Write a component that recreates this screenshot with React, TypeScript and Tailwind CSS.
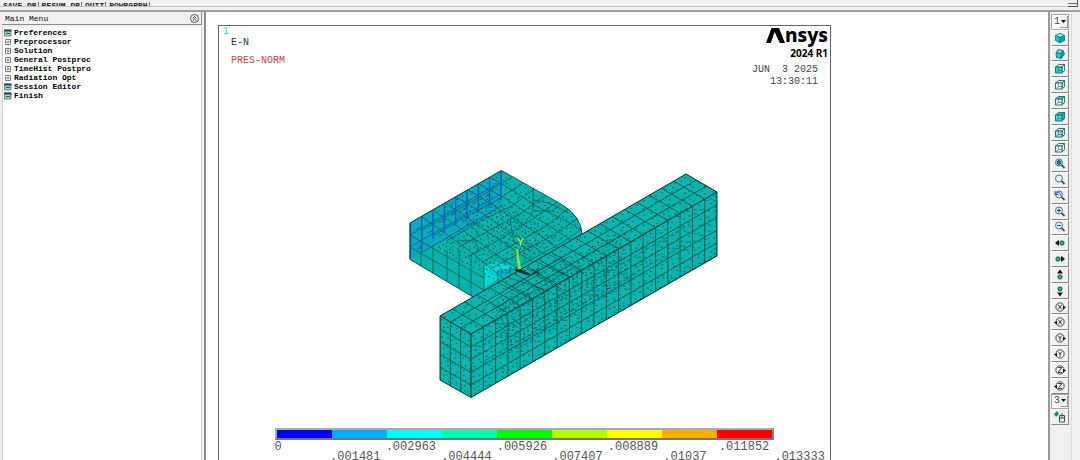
import React from "react";

type Pt = [number, number];

const MENU: { label: string; leaf: boolean }[] = [
  { label: "Preferences", leaf: true },
  { label: "Preprocessor", leaf: false },
  { label: "Solution", leaf: false },
  { label: "General Postproc", leaf: false },
  { label: "TimeHist Postpro", leaf: false },
  { label: "Radiation Opt", leaf: false },
  { label: "Session Editor", leaf: true },
  { label: "Finish", leaf: true },
];

const LEGEND_COLORS = [
  "bg-[#0000ee]",
  "bg-[#00aeff]",
  "bg-[#00ffff]",
  "bg-[#00ffae]",
  "bg-[#00fb00]",
  "bg-[#aeff00]",
  "bg-[#ffff00]",
  "bg-[#ffae00]",
  "bg-[#f60000]",
];

const LEGEND_LABELS = [
  "0", ".001481", ".002963", ".004444", ".005926",
  ".007407", ".008889", ".01037", ".011852", ".013333",
];

const lerp = (a: Pt, b: Pt, t: number): Pt => [a[0] + (b[0] - a[0]) * t, a[1] + (b[1] - a[1]) * t];

const seg = (a: Pt, b: Pt) =>
  `M${a[0].toFixed(1)} ${a[1].toFixed(1)}L${b[0].toFixed(1)} ${b[1].toFixed(1)}`;

/* Grid lines over the parallelogram with corner o and sides o-u and o-v. */
function mesh(o: Pt, u: Pt, v: Pt, nu: number, nv: number) {
  const w: Pt = [u[0] + v[0] - o[0], u[1] + v[1] - o[1]];
  let d = "";
  for (let i = 0; i <= nu; i++) d += seg(lerp(o, u, i / nu), lerp(v, w, i / nu));
  for (let j = 0; j <= nv; j++) d += seg(lerp(o, v, j / nv), lerp(u, w, j / nv));
  return d;
}

/* Small node ticks scattered over the parallelogram. */
function ticks(o: Pt, u: Pt, v: Pt, nu: number, nv: number, len: number, seed: number) {
  let s = seed;
  const rnd = () => {
    s = (s * 16807) % 2147483647;
    return s / 2147483647;
  };
  let d = "";
  for (let i = 0; i < nu; i++) {
    for (let j = 0; j < nv; j++) {
      const a = (i + 0.2 + rnd() * 0.6) / nu;
      const b = (j + 0.2 + rnd() * 0.6) / nv;
      const x = o[0] + (u[0] - o[0]) * a + (v[0] - o[0]) * b;
      const y = o[1] + (u[1] - o[1]) * a + (v[1] - o[1]) * b;
      d += `M${x.toFixed(1)} ${y.toFixed(1)}h${(len * (0.6 + rnd() * 0.6)).toFixed(1)}`;
    }
  }
  return d;
}

const A: Pt = [440, 316];
const B: Pt = [686, 174];
const D: Pt = [471, 334];
const C: Pt = [717, 192];
const E: Pt = [440, 380];
const F: Pt = [471, 397.5];

const BAR = "M440 316L686 174L717 192V256L471 397.5L440 380Z";
const PLATE = "M410 223L501.500 170.500L560 203.500Q582 216 582 235L520 272L473 297L410 259.500Z";

function Model() {
  return (
    <svg viewBox="219 100 611 325" className="block h-auto w-full shrink-0" role="img" aria-label="Element mesh">
      <defs>
        <clipPath id="plate"><path d={PLATE} /></clipPath>
        <clipPath id="bar"><path d={BAR} /></clipPath>
      </defs>
      <path d={PLATE} fill="#0bb3ad" />
      <g clipPath="url(#plate)" fill="none">
        <path d="M410 223L501.500 170.500V207L421 253L410 259.500Z" fill="#0ca9b8" />
        <path d="M484 266l15-4 17 6-14 8-18 12z" fill="#09d9d6" />
        <path d="M499 270l15-2-14 9z" fill="#05a7d5" />
        <path d={ticks([430, 245], [501, 204], [492, 280], 17, 17, 1.2, 71)} stroke="#022f2d" strokeWidth="0.9" />
        <path d={ticks([501, 172], [440, 208], [590, 224], 13, 19, 1.2, 93)} stroke="#022f2d" strokeWidth="0.9" />
        <g stroke="#054b47" strokeWidth="0.65">
          <path d="M512 177L478 198L421 231M523 183L497 200L462 219L433 236M534 189L512 206L484 219L446 241M545 195L520 214L490 230L459 247M557 202L533 219L505 236L471 255M568 209L546 226L516 243L482 262M577 219L552 236L525 250L492 268M582 229L560 244L530 260L505 274" />
          <path d="M490 177L512 190L536 206L560 218L582 230M479 184L503 197L526 212L551 227L572 241M468 190L491 204L516 220L540 235L560 250M456 197L481 212L503 228L528 243L548 256M445 203L469 219L492 235L516 251L536 264M433 210L457 226L480 243L504 260L524 272M421 216L445 233L467 249L488 266L505 280" />
          <path d="M533 190V211L552 211L562 203M533 200L549 203L569 213M510 220L514 242L530 250M457 241L475 240L479 250L466 258M466 221L479 234" />
          <path d="M421 244V268M433 247V274M447 250V281M459 249V288M471 256V297M484 265V304M410 235L484 278M410 247L484 290" />
          <path d="M498 270V284M510 267V278" />
        </g>
        <g stroke="#085fc5" strokeWidth="1.4">
          {[0, 1, 2, 3, 4, 5, 6, 7, 8].map((i) => {
            const x = 410.5 + i * 11.3;
            const y = 223 - i * 6.5;
            return <path key={i} d={`M${x} ${y}v${i < 2 ? 34 : 29}`} />;
          })}
          <path d="M410 235L501 182M410 247L501 194M421 253L501 206" strokeWidth="1" />
        </g>
        <path d="M416 230l6-4M428 233l5-3M439 223l6-3M451 216l5-3M462 210l5-3M474 203l5-3M485 197l5-3M417 249l4-2M439 236l4-2M462 222l4-2M485 209l4-2" stroke="#064996" strokeWidth="0.7" />
      </g>
      <path d={PLATE} fill="none" stroke="#054441" strokeWidth="0.9" />
      <path d="M410 223L501.500 170.500V181M410 223V259" fill="none" stroke="#0854a7" strokeWidth="1" />

      <path d={BAR} fill="#0bb5ae" />
      <g clipPath="url(#bar)" fill="none">
        <path d={ticks(D, C, F, 46, 12, 2.4, 19)} stroke="#054c48" strokeWidth="0.7" />
        <path d={ticks(A, B, D, 46, 5, 1.4, 41)} stroke="#022f2d" strokeWidth="0.9" />
        <path d={ticks(A, D, E, 7, 12, 1.2, 13)} stroke="#022f2d" strokeWidth="0.8" />
        <path d={ticks([492, 305], [620, 231], [502, 358], 31, 18, 2.1, 59)} stroke="#054c48" strokeWidth="0.6" />
        <g stroke="#04504c" strokeWidth="0.85">
          <path d={mesh(A, B, D, 20, 3)} />
          <path d={mesh(D, C, F, 20, 5)} />
          <path d={mesh(A, D, E, 3, 5)} />
        </g>
        <g stroke="#064542" strokeWidth="0.6">
          <path d="M496 282l38 18M501 275l47 16M526 268l35 21M532 260l43 19M548 254l36 19M485 306l85-50M497 313l78-46M506 289l58-33" />
          <path d="M478 318L677 203M480 330L690 208M482 345L690 224M486 360L690 241" strokeDasharray="4 3" />
        </g>
      </g>
      <path d={BAR} fill="none" stroke="#043f3c" strokeWidth="1" />
      <path d="M440 316L471 334L717 192M471 334V397" fill="none" stroke="#04504c" strokeWidth="0.9" />

      <path d="M518.500 270L516.500 249L517.500 249L520.500 269Z" fill="#7fdf35" stroke="#9bed20" strokeWidth="0.8" />
      <path d="M517.500 238l3 4 3-4M520.500 242v4" fill="none" stroke="#a3ee2b" strokeWidth="1.3" />
      <path d="M515 269l6 .5 11 5-5 .5-12-4z" fill="#052e2b" />
      <path d="M532 269l7 5M539 268l-7 7" stroke="#05423f" strokeWidth="1.2" />
    </svg>
  );
}

type Tool = { name: string; icon: React.ReactNode };

function Cube({ fill = "#f0f0f0", side = "#f0f0f0", front = "#f0f0f0" }: { fill?: string; side?: string; front?: string }) {
  return (
    <g stroke="#1b6c6b" strokeWidth="0.9" strokeLinejoin="round">
      <path d="M1.500 4L4.500 1.500H10.500L8 4Z" fill={fill} />
      <path d="M8 4L10.500 1.500V7.500L8 10Z" fill={side} />
      <path d="M1.500 4H8V10H1.500Z" fill={front} />
      <path d="M1.500 10L4.500 7.500H8M4.500 4V7.500" fill="none" strokeWidth="0.6" />
    </g>
  );
}

function Lens({ children }: { children?: React.ReactNode }) {
  return (
    <g fill="none">
      <circle cx="5" cy="4.500" r="3.500" stroke="#4d7589" fill="#e5f5fa" />
      <path d="M7.500 7L10.500 10" stroke="#33424b" strokeWidth="1.700" />
      {children}
    </g>
  );
}

function Ball({ x, y }: { x: number; y: number }) {
  return (
    <g>
      <circle cx={x} cy={y} r="2.200" fill="#178a80" stroke="#0b5951" strokeWidth="0.700" />
      <circle cx={x} cy={y} r="0.700" fill="#a5e3dd" />
    </g>
  );
}

function Spin({ axis, back }: { axis: "X" | "Y" | "Z"; back?: boolean }) {
  const marks = { X: "M4 3.500l4 5M8 3.500l-4 5", Y: "M4 3.500l2 2.500 2-2.500M6 6v3", Z: "M4 3.500h4l-4 5h4" };
  return (
    <g fill="none" stroke="#404040" strokeWidth="0.800">
      <circle cx="6" cy="6" r="4.200" strokeDasharray="22 4" transform={back ? "rotate(200 6 6)" : "rotate(30 6 6)"} />
      <path d={marks[axis]} strokeWidth="1" />
      <path d={back ? "M0 6.500l3-2v4z" : "M12 6.500l-3-2v4z"} fill="#111" stroke="none" />
    </g>
  );
}

const TOOLS: Tool[] = [
  {
    name: "Isometric View",
    icon: (
      <g stroke="#08797a" strokeWidth="0.800" strokeLinejoin="round">
        <path d="M1.500 3.500L6 1.200L10.500 3.500L6 5.500Z" fill="#7af1f2" />
        <path d="M1.500 3.500L6 5.500V10.800L1.500 8.500Z" fill="#12cbd2" />
        <path d="M10.500 3.500L6 5.500V10.800L10.500 8.500Z" fill="#0aa5ac" />
      </g>
    ),
  },
  {
    name: "Oblique View",
    icon: (
      <g stroke="#08696a" strokeWidth="0.800" strokeLinejoin="round">
        <path d="M2 5L4 1.500L9 2.500L7.500 5.500Z" fill="#4be5e8" />
        <path d="M2 5L7.500 5.500L7 10.500L2.500 9.500Z" fill="#19d4da" />
        <path d="M9 2.500L10.500 6L7 10.500L7.500 5.500Z" fill="#0aa5ac" />
      </g>
    ),
  },
  { name: "Front View", icon: <Cube front="#20d8dc" /> },
  { name: "Right View", icon: <Cube side="#bfe9ea" /> },
  { name: "Top View", icon: <Cube fill="#20d8dc" /> },
  { name: "Back View", icon: <Cube fill="#20c8cc" side="#13b5bc" front="#52d5d9" /> },
  { name: "Left View", icon: <Cube front="#9fdfe1" /> },
  { name: "Bottom View", icon: <Cube /> },
  { name: "Fit View", icon: <Lens><circle cx="5" cy="4.500" r="2" fill="#0b8f8f" stroke="#075c5c" /></Lens> },
  { name: "Zoom Model", icon: <Lens /> },
  { name: "Back Up", icon: <Lens><path d="M1 1v3.500h3.500M1.500 4C4 1 7 3 7 6" stroke="#244fb0" /></Lens> },
  { name: "Zoom In", icon: <Lens><path d="M3 4.500h4M5 2.500v4" stroke="#123d9a" /></Lens> },
  { name: "Zoom Out", icon: <Lens><path d="M3 4.500h4" stroke="#12609a" /></Lens> },
  { name: "Pan Left", icon: <g><path d="M1 6l4-3v6z" fill="#111" /><Ball x={8} y={6} /></g> },
  { name: "Pan Right", icon: <g><path d="M11 6L7 3v6z" fill="#111" /><Ball x={4} y={6} /></g> },
  { name: "Pan Up", icon: <g><path d="M6 .5l3 4H3z" fill="#111" /><Ball x={6} y={8} /></g> },
  { name: "Pan Down", icon: <g><path d="M6 11.500l3-4H3z" fill="#111" /><Ball x={6} y={4} /></g> },
  { name: "Rotate X +", icon: <Spin axis="X" /> },
  { name: "Rotate X -", icon: <Spin axis="X" back /> },
  { name: "Rotate Y +", icon: <Spin axis="Y" /> },
  { name: "Rotate Y -", icon: <Spin axis="Y" back /> },
  { name: "Rotate Z +", icon: <Spin axis="Z" /> },
  { name: "Rotate Z -", icon: <Spin axis="Z" back /> },
];

const RAISED =
  "flex h-4 w-[18px] items-center justify-center border border-t-white border-l-white border-r-[#898989] border-b-[#898989] bg-[#f0f0f0]";

function ToolButton({ name, icon }: Tool) {
  return (
    <button type="button" aria-label={name} className={RAISED}>
      <svg viewBox="0 0 12 12" className="size-3">{icon}</svg>
    </button>
  );
}

function Picker({ label, value }: { label: string; value: string }) {
  return (
    <div className="relative flex h-4 w-[18px] items-center border border-[#a9a9a9] bg-white">
      <select
        aria-label={label}
        defaultValue={value}
        className="h-full w-full appearance-none bg-transparent pl-0.5 font-['Liberation_Mono',monospace] text-[10px] leading-3 text-[#444]"
      >
        {["1", "2", "3", "4", "5"].map((v) => <option key={v}>{v}</option>)}
      </select>
      <span className="pointer-events-none absolute inset-y-px right-0 flex w-2 items-center justify-center border-r border-b border-[#999] bg-[#f0f0f0]">
        <svg viewBox="0 0 5 3" className="h-[3px] w-[5px]"><path d="M0 0h5L2.500 3z" fill="#111" /></svg>
      </span>
    </div>
  );
}

export default function App() {
  return (
    <div className="flex h-screen flex-col overflow-hidden bg-[#f0f0f0]">
      <header className="flex h-3 shrink-0 items-start justify-between border-b-2 border-[#a0a0a0]">
        <div className="flex h-[7px] grow overflow-hidden border-b border-[#c4c4c4] pt-0.5">
          {["SAVE_DB", "RESUM_DB", "QUIT", "POWRGRPH"].map((t) => (
            <button
              key={t}
              type="button"
              className="flex h-4 items-start border-r border-[#777] pr-px pl-[3px] font-['Liberation_Mono',monospace] text-[8px] leading-[8px] font-bold text-[#222]"
            >
              {t}
            </button>
          ))}
        </div>
        <div className="mr-0.5 flex h-[7px] w-2.5 items-center border-r border-b border-[#555]">
          <span className="h-px w-full bg-[#777]" />
        </div>
      </header>

      <div className="flex min-h-0 grow">
        <aside className="flex w-[206px] shrink-0 flex-col border-r-2 border-[#8c8c8c] pr-0.5 pl-0.5">
          <div className="flex h-[13px] shrink-0 items-end justify-between border-r border-b border-[#8c8c8c] pr-0.5 pl-[3px]">
            <h1 className="font-['Liberation_Mono',monospace] text-[8px] leading-[10px] text-[#111]">Main Menu</h1>
            <button type="button" aria-label="Collapse menu" className="mb-px size-[9px]">
              <svg viewBox="0 0 9 9" className="size-[9px]" fill="none" stroke="#333">
                <circle cx="4.500" cy="4.500" r="4" fill="#f7f7f7" strokeWidth="0.800" />
                <path d="M2.700 4.300L4.500 2.500L6.300 4.300M2.700 6.700L4.500 4.900L6.300 6.700" />
              </svg>
            </button>
          </div>
          <ul className="mt-0.5 grow border-r border-l border-[#cfcfcf] bg-white pt-px pl-px">
            {MENU.map((m) => (
              <li key={m.label} className="h-[9px]">
                <button type="button" className="flex h-[9px] items-center gap-0.5">
                  <svg viewBox="0 0 8 8" className="size-2">
                    {m.leaf ? (
                      <g>
                        <path d="M.5 1h6.500v6h-6.500z" fill="#a9c8c1" stroke="#4d7775" strokeWidth="0.800" />
                        <path d="M0 .5h7.500v2H0z" fill="#24514f" />
                        <path d="M2 4.500h4" stroke="#285e58" />
                      </g>
                    ) : (
                      <path d="M1.500 1.500h5v5h-5zM2.500 4h3M4 2.500v3" fill="none" stroke="#5d5d5d" strokeWidth="0.800" />
                    )}
                  </svg>
                  <span className="font-['Liberation_Mono',monospace] text-[8px] leading-[9px] font-bold whitespace-nowrap text-black">
                    {m.label}
                  </span>
                </button>
              </li>
            ))}
          </ul>
        </aside>

        <main className="min-w-0 grow bg-white pt-[13px] pr-4 pl-3 font-['Liberation_Mono',monospace]">
          <section className="flex h-full w-full max-w-[613px] flex-col border-x border-t border-[#666]">
            <div className="flex h-[74px] shrink-0 justify-between pr-0.5">
              <div className="flex pl-1">
                <span className="text-[10px] leading-3 text-[#35d6c8]">1</span>
                <div className="flex flex-col gap-1.5 pt-[11px] pl-0.5 text-[10px] leading-3">
                  <span className="text-[#333]">E-N</span>
                  <span className="text-[#d23b3b]">PRES-NORM</span>
                </div>
              </div>
              <div className="flex flex-col items-end">
                <div className="flex h-5 items-start font-['Noto_Sans',sans-serif] text-black">
                  <svg viewBox="0 0 19 15" className="mt-0.5 h-[15px] w-[19px]" aria-hidden="true">
                    <path d="M5.500 0H10L4.800 15H0Z" />
                    <path d="M7.500 0H13L19 15H13.800L8.200 3Z" />
                  </svg>
                  <span className="text-[19px] leading-[18px] font-extrabold">nsys</span>
                </div>
                <span className="pt-px font-['Noto_Sans',sans-serif] text-[10px] leading-3 font-bold text-black">2024 R1</span>
                <div className="flex flex-col items-end pt-[5px] pr-2.5 text-[10px] leading-3 whitespace-pre text-[#444]">
                  <span>{"JUN  3 2025"}</span>
                  <span>13:30:11</span>
                </div>
              </div>
            </div>

            <Model />

            <div className="ml-auto w-10/11 shrink-0 pt-[3px]">
              <div className="grid h-3 w-9/10 grid-cols-9 border-2 border-t-[#aaa] border-r-[#888] border-b-[#777] border-l-[#aaa]">
                {LEGEND_COLORS.map((c) => <span key={c} className={c} />)}
              </div>
              <div className="grid grid-cols-10 text-[12px] leading-[14px] text-[#555]">
                {LEGEND_LABELS.map((l, i) => (
                  <span key={l} className={i % 2 ? "pt-2.5" : ""}>{l}</span>
                ))}
              </div>
            </div>
          </section>
        </main>

        <nav aria-label="View controls" className="flex w-8 shrink-0 border-l-2 border-[#9a9a9a] pt-0.5">
          <div className="flex h-full w-[22px] flex-col border-r border-[#dcdcdc] pl-px">
            <div className="flex h-[411px] shrink-0 flex-col justify-between">
              <Picker label="Window" value="1" />
              {TOOLS.map((t) => <ToolButton key={t.name} {...t} />)}
              <Picker label="Rate" value="3" />
              <ToolButton
                name="Dynamic Mode"
                icon={
                  <g>
                    <path d="M0 3l3-3 2 3-3 3z" fill="#128b80" />
                    <path d="M5.500 4.500h5v6.500h-5zM5.500 7h5M8 4.500V7M8 4.500V2" fill="none" stroke="#3b5552" />
                  </g>
                }
              />
            </div>
          </div>
        </nav>
      </div>
    </div>
  );
}
